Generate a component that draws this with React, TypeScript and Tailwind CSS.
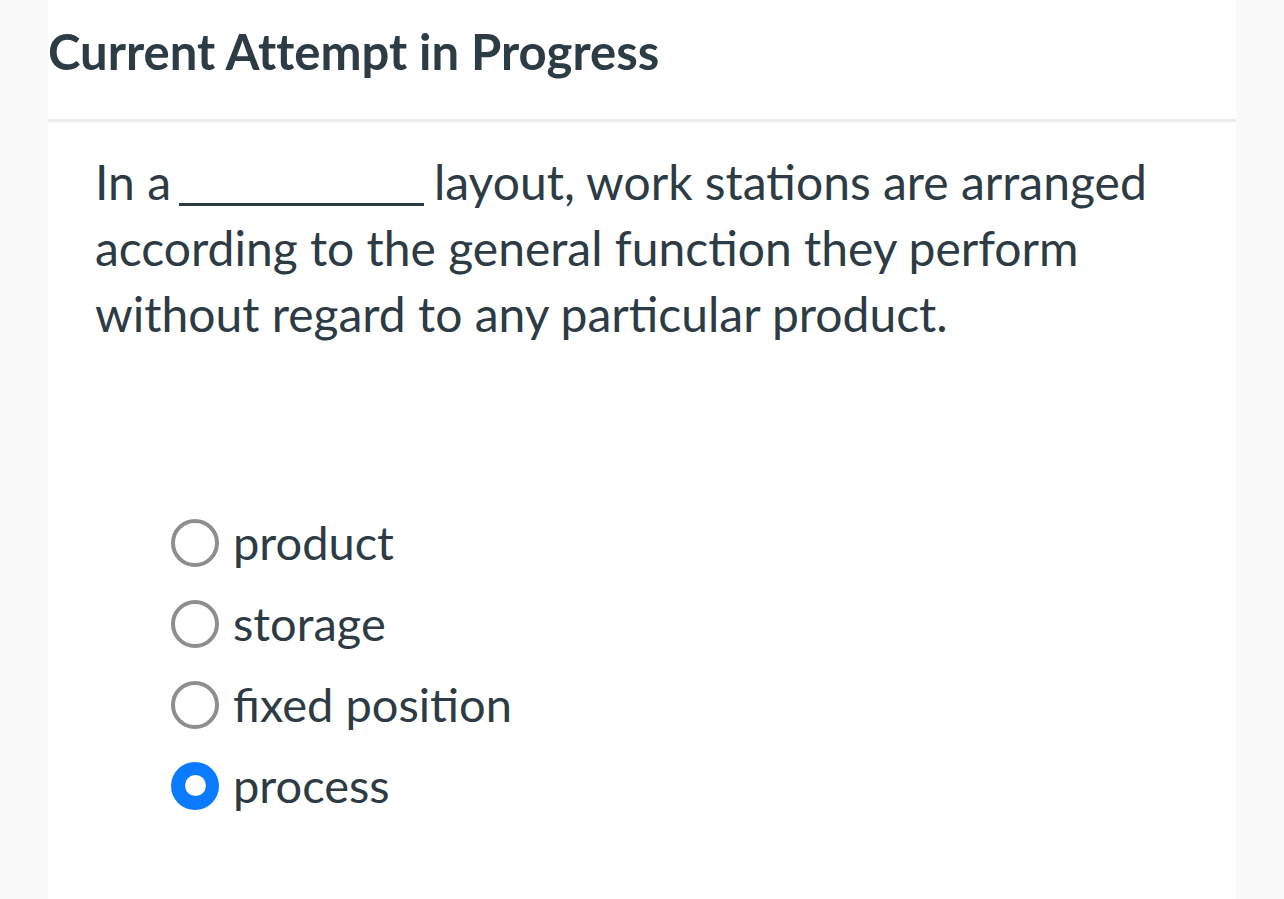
import { useState } from "react";

const choices = ["product", "storage", "fixed position", "process"];

const Radio = ({ checked }: { checked: boolean }) =>
  checked ? (
    <span className="flex h-[48px] w-[48px] shrink-0 items-center justify-center rounded-full bg-[#0a7aff]">
      <span className="h-[21px] w-[21px] rounded-full bg-white" />
    </span>
  ) : (
    <span className="h-[48px] w-[48px] shrink-0 rounded-full border-[4px] border-[#8e8e8e] bg-white" />
  );

export default function App() {
  const [picked, setPicked] = useState("process");

  return (
    <div className="min-h-screen bg-[#f9f9f9] font-['Lato',sans-serif] text-[#2d3b45]">
      <div className="mx-[48px] min-h-[899px] w-[1188px] bg-white">
        <div className="flex h-[119px] items-center pb-[17px]">
          <h1 className="text-[49px] font-bold leading-none [font-variant-ligatures:none]">
            Current Attempt in Progress
          </h1>
        </div>
        <div className="h-[3px] bg-[#ebebeb]" />

        <p className="mt-[27px] pl-[47px] pr-[20px] text-[48px] leading-[66px]">
          In a
          {/* fill-in blank */}
          <span className="ml-[8px] mr-[10px] inline-block w-[245px] border-b-[3px] border-[#2d3b45] align-[-6px]" />
          layout, work stations are arranged according to the general function they perform without regard to any
          particular product.
        </p>

        <div className="mt-[155px] pl-[123px]">
          {choices.map((c) => (
            <label
              key={c}
              className="flex h-[81px] cursor-pointer items-center gap-[14px] text-[47px]"
              onClick={() => setPicked(c)}
            >
              <Radio checked={picked === c} />
              <span>{c}</span>
            </label>
          ))}
        </div>
      </div>
    </div>
  );
}
